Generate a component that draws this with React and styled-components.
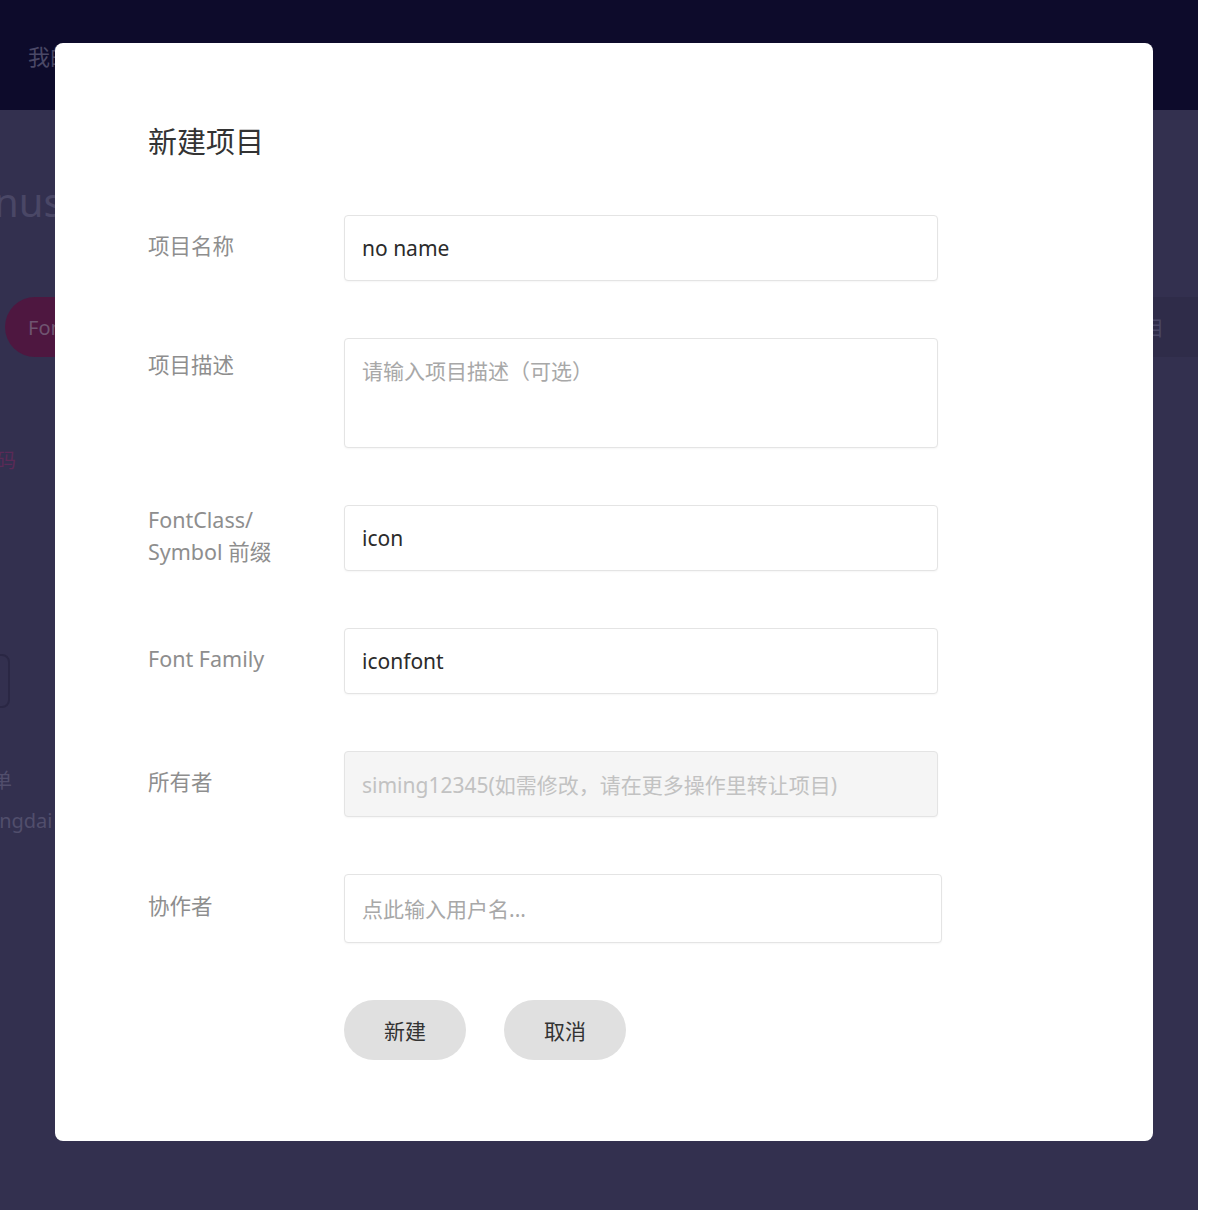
import styled, { createGlobalStyle } from "styled-components";

const GlobalStyle = createGlobalStyle`
  html, body {
    margin: 0;
    padding: 0;
    background: #ffffff;
  }
  body {
    font-family: "Noto Sans", "Noto Sans CJK SC", sans-serif;
  }
`;

const StyledPage = styled.div`
  position: relative;
  width: 1198px;
  height: 1210px;
  overflow: hidden;
  background: #33304f;
`;

const StyledNav = styled.div`
  display: flex;
  align-items: center;
  height: 110px;
  padding-left: 28px;
  background: #0d0b2b;
  color: #4a4866;
  font-size: 22px;
`;

const StyledBehind = styled.div`
  display: flex;
  flex-direction: column;
  color: #4f4c6c;
`;

const StyledBigTitle = styled.div`
  margin-top: 66px;
  font-size: 40px;
  line-height: 52px;
  margin-left: -6px;
  color: #4a4766;
`;

const StyledTabRow = styled.div`
  display: flex;
  justify-content: space-between;
  align-items: center;
  margin-top: 69px;
  height: 60px;
`;

const StyledPill = styled.div`
  display: flex;
  align-items: center;
  width: 120px;
  height: 60px;
  margin-left: 5px;
  padding-left: 23px;
  box-sizing: border-box;
  border-radius: 30px;
  background: #4e1740;
  color: #6f5470;
  font-size: 20px;
`;

const StyledTabRight = styled.div`
  display: flex;
  align-items: center;
  width: 60px;
  height: 60px;
  padding-left: 6px;
  box-sizing: border-box;
  background: #2f2c49;
  color: #4a4766;
  font-size: 20px;
`;

const StyledSideText = styled.div`
  margin-top: ${(p) => p.$top}px;
  font-size: 20px;
  line-height: 26px;
  color: ${(p) => p.$color || "#514e6c"};
  margin-left: ${(p) => p.$left || 0}px;
`;

const StyledGhostBox = styled.div`
  width: 40px;
  height: 50px;
  margin-top: 180px;
  margin-left: -34px;
  border: 2px solid #2a2744;
  border-radius: 8px;
`;

const StyledModal = styled.div`
  position: absolute;
  left: 55px;
  top: 43px;
  width: 1098px;
  height: 1098px;
  box-sizing: border-box;
  padding: 77px 0 0 93px;
  background: #ffffff;
  border-radius: 8px;
`;

const StyledModalTitle = styled.div`
  font-size: 29px;
  line-height: 40px;
  color: #333333;
  font-family: "Noto Sans CJK SC", sans-serif;
`;

const StyledForm = styled.div`
  display: flex;
  flex-direction: column;
  gap: 57px;
  margin-top: 55px;
`;

const StyledRow = styled.div`
  display: flex;
  align-items: ${(p) => (p.$top ? "flex-start" : "center")};
`;

const StyledLabel = styled.div`
  width: 196px;
  flex-shrink: 0;
  padding-top: ${(p) => (p.$top ? 16 : 0)}px;
  margin-top: -5px;
  font-size: 21.5px;
  line-height: 32px;
  color: #8e8e8e;
`;

const StyledInput = styled.input`
  width: ${(p) => p.$width || 594}px;
  height: ${(p) => p.$height || 66}px;
  box-sizing: border-box;
  padding: 0 17px;
  border: 1px solid #e4e4e4;
  border-radius: 4px;
  box-shadow: 0 1px 2px rgba(0, 0, 0, 0.04);
  background: ${(p) => (p.disabled ? "#f5f5f5" : "#ffffff")};
  font-family: "Noto Sans", "Noto Sans CJK SC", sans-serif;
  font-size: 21px;
  color: ${(p) => (p.disabled ? "#c2c2c2" : "#2b2b2b")};
  outline: none;

  &::placeholder {
    color: #a8a8a8;
  }
`;

const StyledTextArea = styled.textarea`
  width: 594px;
  height: 110px;
  box-sizing: border-box;
  padding: 16px 17px;
  border: 1px solid #e4e4e4;
  border-radius: 4px;
  box-shadow: 0 1px 2px rgba(0, 0, 0, 0.04);
  resize: none;
  font-family: "Noto Sans", "Noto Sans CJK SC", sans-serif;
  font-size: 21px;
  line-height: 32px;
  outline: none;

  &::placeholder {
    color: #a8a8a8;
  }
`;

const StyledButtons = styled.div`
  display: flex;
  gap: 38px;
  margin-top: 57px;
  padding-left: 196px;
`;

const StyledButton = styled.button`
  width: 122px;
  height: 60px;
  border: none;
  border-radius: 30px;
  background: #e0e0e0;
  font-family: "Noto Sans CJK SC", sans-serif;
  font-size: 21px;
  color: #333333;
  cursor: pointer;
`;

const App = () => {
  return (
    <>
      <GlobalStyle />
      <StyledPage>
        <StyledNav>我的项目</StyledNav>
        <StyledBehind>
          <StyledBigTitle>nusic</StyledBigTitle>
          <StyledTabRow>
            <StyledPill>Font class</StyledPill>
            <StyledTabRight>目</StyledTabRight>
          </StyledTabRow>
          <StyledSideText $top={91} $color="#5b2a57" $left={-4}>码</StyledSideText>
          <StyledGhostBox />
          <StyledSideText $top={60} $left={-8}>单</StyledSideText>
          <StyledSideText $top={14} $left={-6}>ingdai</StyledSideText>
        </StyledBehind>

        <StyledModal>
          <StyledModalTitle>新建项目</StyledModalTitle>
          <StyledForm>
            <StyledRow>
              <StyledLabel>项目名称</StyledLabel>
              <StyledInput defaultValue="no name" />
            </StyledRow>
            <StyledRow $top>
              <StyledLabel $top>项目描述</StyledLabel>
              <StyledTextArea placeholder="请输入项目描述（可选）" />
            </StyledRow>
            <StyledRow>
              <StyledLabel>
                FontClass/
                <br />
                Symbol 前缀
              </StyledLabel>
              <StyledInput defaultValue="icon" />
            </StyledRow>
            <StyledRow>
              <StyledLabel>Font Family</StyledLabel>
              <StyledInput defaultValue="iconfont" />
            </StyledRow>
            <StyledRow>
              <StyledLabel>所有者</StyledLabel>
              <StyledInput disabled value="siming12345(如需修改，请在更多操作里转让项目)" readOnly />
            </StyledRow>
            <StyledRow>
              <StyledLabel>协作者</StyledLabel>
              <StyledInput $width={598} $height={69} placeholder="点此输入用户名..." />
            </StyledRow>
          </StyledForm>
          <StyledButtons>
            <StyledButton>新建</StyledButton>
            <StyledButton>取消</StyledButton>
          </StyledButtons>
        </StyledModal>
      </StyledPage>
    </>
  );
};

export default App;
